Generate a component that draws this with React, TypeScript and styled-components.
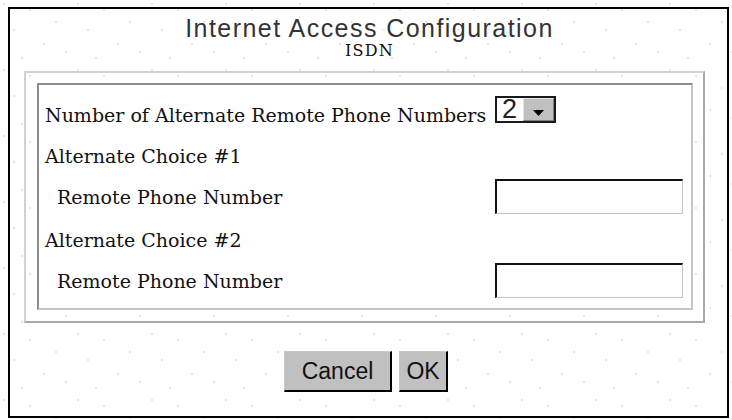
import React from "react";
import styled, { createGlobalStyle } from "styled-components";

const dots = [
  [4, 4], [30, 10], [56, 22], [14, 30], [44, 44], [66, 52], [22, 58],
];
const dotLayers = dots
  .map(([x, y]) => `radial-gradient(circle at ${x}px ${y}px, #d4d4d4 0.5px, transparent 1px)`)
  .join(", ");

const Global = createGlobalStyle`
  html, body { margin: 0; padding: 0; }
  body {
    width: 732px;
    height: 420px;
    overflow: hidden;
    background-color: #fff;
    background-image: ${dotLayers};
    background-size: 74px 66px;
  }
`;

const Frame = styled.div`
  box-sizing: border-box;
  margin: 7px 0 0 8px;
  width: 721px;
  height: 411px;
  border: 2px solid #000;
  display: flex;
  flex-direction: column;
  align-items: stretch;
  padding-top: 5px;
`;

const Title = styled.div`
  font-family: "Liberation Sans", Arial, sans-serif;
  font-size: 25px;
  line-height: 28px;
  letter-spacing: 1.45px;
  color: #333;
  text-align: center;
  padding-left: 2px;
`;

const Subtitle = styled.div`
  font-family: "DejaVu Serif", "Liberation Serif", serif;
  font-size: 16px;
  line-height: 18px;
  letter-spacing: 1.2px;
  color: #111;
  text-align: center;
  padding-left: 2px;
`;

const OuterBox = styled.div`
  box-sizing: border-box;
  margin: 11px 0 0 14px;
  width: 681px;
  border-style: solid;
  border-width: 2px;
  border-color: #d2d2d2 #a8a8a8 #a8a8a8 #d2d2d2;
  padding: 10px 10px 11px 11px;
`;

const InnerBox = styled.div`
  box-sizing: border-box;
  background: #fff;
  border-style: solid;
  border-width: 2px;
  border-color: #8c8c8c #c6c6c6 #c6c6c6 #8c8c8c;
  padding: 0 8px 10px 6px;
  display: flex;
  flex-direction: column;
`;

const Row = styled.div<{ $mt: number; $align?: string }>`
  display: grid;
  grid-template-columns: 450px 188px;
  align-items: ${(p) => p.$align || "center"};
  margin-top: ${(p) => p.$mt}px;
`;

const Label = styled.div<{ $indent?: boolean }>`
  font-family: "DejaVu Serif", "Liberation Serif", serif;
  font-size: 19px;
  line-height: 22px;
  color: #111;
  white-space: nowrap;
  padding-left: ${(p) => (p.$indent ? 12 : 0)}px;
`;

const Select = styled.div`
  box-sizing: border-box;
  width: 61px;
  height: 27px;
  margin-bottom: 3px;
  border: 2px solid #1a1a1a;
  display: flex;
  background: #fff;
`;

const SelectValue = styled.div`
  flex: 1;
  font-family: "Liberation Sans", Arial, sans-serif;
  font-size: 27px;
  line-height: 23px;
  color: #222;
  padding-left: 5px;
`;

const SelectButton = styled.div`
  box-sizing: border-box;
  width: 31px;
  background: #c0c0c0;
  border-style: solid;
  border-width: 1px;
  border-color: #e4e4e4 #808080 #808080 #e4e4e4;
  display: flex;
  justify-content: center;
  align-items: center;
  padding-top: 6px;
`;

const TextInput = styled.div`
  box-sizing: border-box;
  width: 188px;
  height: 35px;
  background: #fff;
  border-style: solid;
  border-width: 2px 1px 1px 2px;
  border-color: #111 #c4c4c4 #c4c4c4 #111;
`;

const ButtonBar = styled.div`
  display: flex;
  justify-content: center;
  gap: 7px;
  margin-top: 28px;
  padding-right: 5px;
`;

const Button = styled.div<{ $w: number }>`
  box-sizing: border-box;
  width: ${(p) => p.$w}px;
  height: 41px;
  background: #c0c0c0;
  border-style: solid;
  border-width: 1px 2px 2px 1px;
  border-color: #c8c8c8 #000 #000 #c8c8c8;
  font-family: "Liberation Sans", Arial, sans-serif;
  font-size: 23px;
  color: #111;
  display: flex;
  align-items: center;
  justify-content: center;
  padding-top: 1px;
`;

const Arrow = () => (
  <svg width="11" height="6" viewBox="0 0 11 6">
    <path d="M0 0 H11 L5.5 6 Z" fill="#000" />
  </svg>
);

export default function App() {
  return (
    <>
      <Global />
      <Frame>
        <Title>Internet Access Configuration</Title>
        <Subtitle>ISDN</Subtitle>
        <OuterBox>
          <InnerBox>
            <Row $mt={11} $align="end">
              <Label>Number of Alternate Remote Phone Numbers</Label>
              <Select>
                <SelectValue>2</SelectValue>
                <SelectButton>
                  <Arrow />
                </SelectButton>
              </Select>
            </Row>
            <Row $mt={19}>
              <Label>Alternate Choice #1</Label>
            </Row>
            <Row $mt={12}>
              <Label $indent>Remote Phone Number</Label>
              <TextInput />
            </Row>
            <Row $mt={15}>
              <Label>Alternate Choice #2</Label>
            </Row>
            <Row $mt={12}>
              <Label $indent>Remote Phone Number</Label>
              <TextInput />
            </Row>
          </InnerBox>
        </OuterBox>
        <ButtonBar>
          <Button $w={108}>Cancel</Button>
          <Button $w={49}>OK</Button>
        </ButtonBar>
      </Frame>
    </>
  );
}
